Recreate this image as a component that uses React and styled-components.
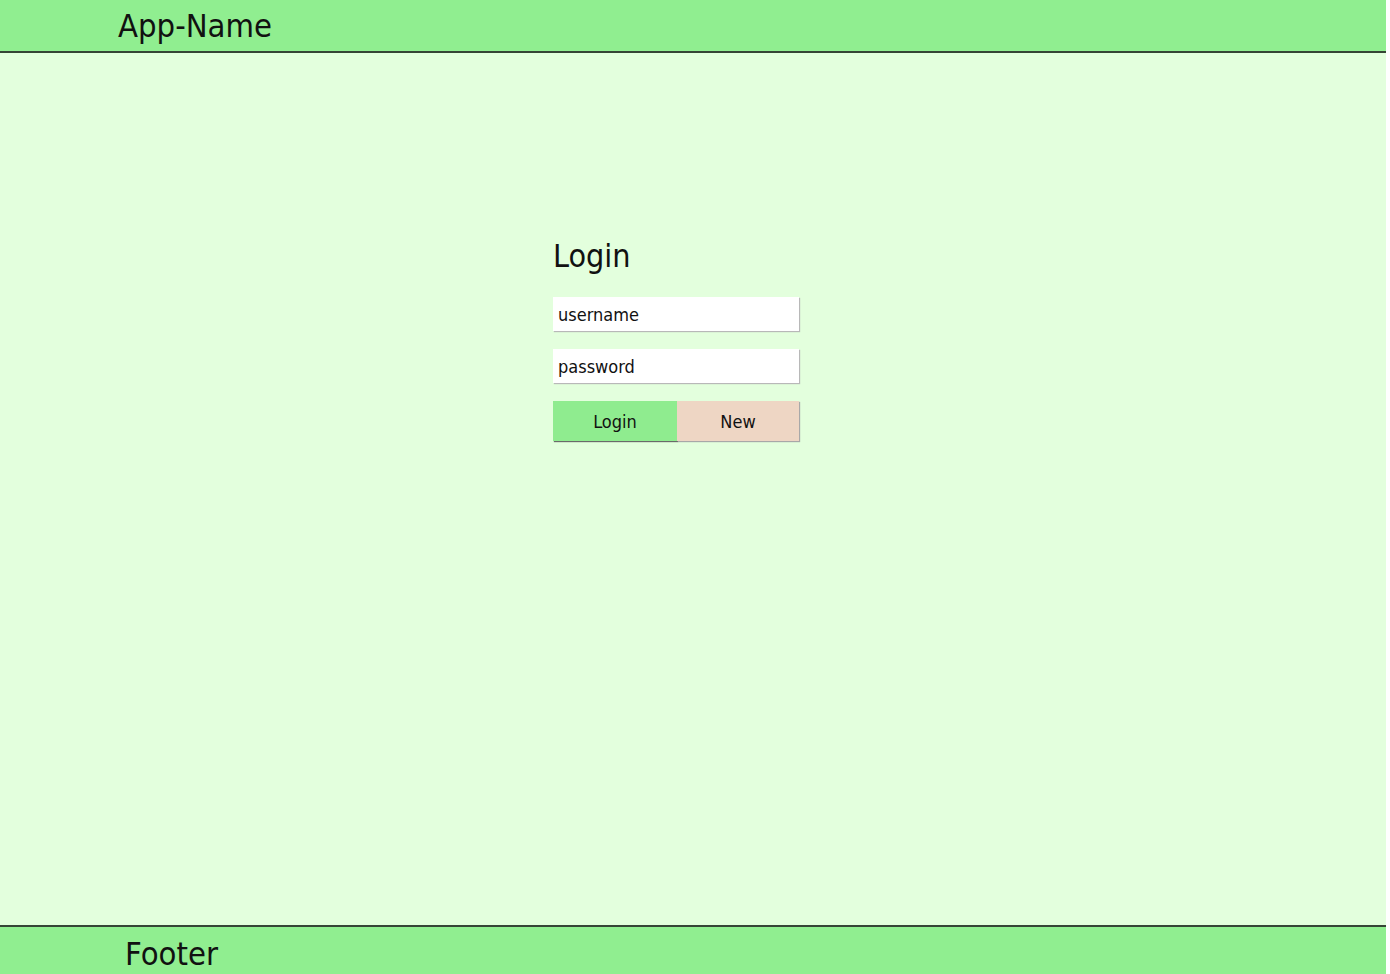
import React from "react";
import styled, { createGlobalStyle } from "styled-components";

const Global = createGlobalStyle`
  html, body { margin: 0; padding: 0; background: #ffffff; }
  body { font-family: "DejaVu Sans Condensed", "DejaVu Sans", sans-serif; color: #111; }
  * { box-sizing: border-box; }
`;

const Page = styled.div`
  width: 1386px;
  height: 974px;
  display: flex;
  flex-direction: column;
  background: #e3ffdd;
`;

const Bar = styled.div`
  flex: 0 0 auto;
  height: ${(p) => p.$h}px;
  background: #90ee90;
  display: flex;
  align-items: ${(p) => (p.$top ? "center" : "flex-start")};
  padding-left: ${(p) => p.$pad}px;
  ${(p) => (p.$top ? "border-bottom: 2px solid #354535;" : "border-top: 2px solid #354535;")}
`;

const BarTitle = styled.div`
  font-size: 32.5px;
  line-height: 1;
  padding-top: ${(p) => p.$pt}px;
`;

const Main = styled.main`
  flex: 1 1 auto;
  display: flex;
  justify-content: flex-start;
  padding-left: 553px;
  padding-top: 183px;
`;

const Form = styled.form`
  width: 247px;
  display: flex;
  flex-direction: column;
`;

const Heading = styled.h1`
  margin: 0 0 21px;
  font-size: 32px;
  font-weight: normal;
  line-height: 40px;
`;

const Input = styled.input`
  width: 246px;
  height: 34px;
  border: none;
  background: #ffffff;
  box-shadow: 1px 1px 1px #b8b8b8;
  font-family: inherit;
  font-size: 18px;
  color: #111;
  padding: 0 5px;
  margin-bottom: 18px;
  outline: none;
  &::placeholder { color: #111; opacity: 1; }
`;

const Buttons = styled.div`
  display: flex;
`;

const Button = styled.button`
  width: ${(p) => p.$w}px;
  height: 40px;
  border: none;
  background: ${(p) => p.$bg};
  box-shadow: 1px 1px 1px ${(p) => p.$sh};
  font-family: inherit;
  font-size: 18px;
  color: #111;
  padding: 0;
  cursor: pointer;
`;

export default function App() {
  return (
    <Page>
      <Global />
      <Bar $h={53} $top $pad={118}>
        <BarTitle $pt={2}>App-Name</BarTitle>
      </Bar>
      <Main>
        <Form onSubmit={(e) => e.preventDefault()}>
          <Heading>Login</Heading>
          <Input placeholder="username" />
          <Input placeholder="password" type="password" />
          <Buttons>
            <Button type="submit" $w={124} $bg="#8fec8f" $sh="#6a6a6a">Login</Button>
            <Button type="button" $w={122} $bg="#eed6c4" $sh="#a8a8a8">New</Button>
          </Buttons>
        </Form>
      </Main>
      <Bar $h={49} $pad={125}>
        <BarTitle $pt={11}>Footer</BarTitle>
      </Bar>
    </Page>
  );
}
